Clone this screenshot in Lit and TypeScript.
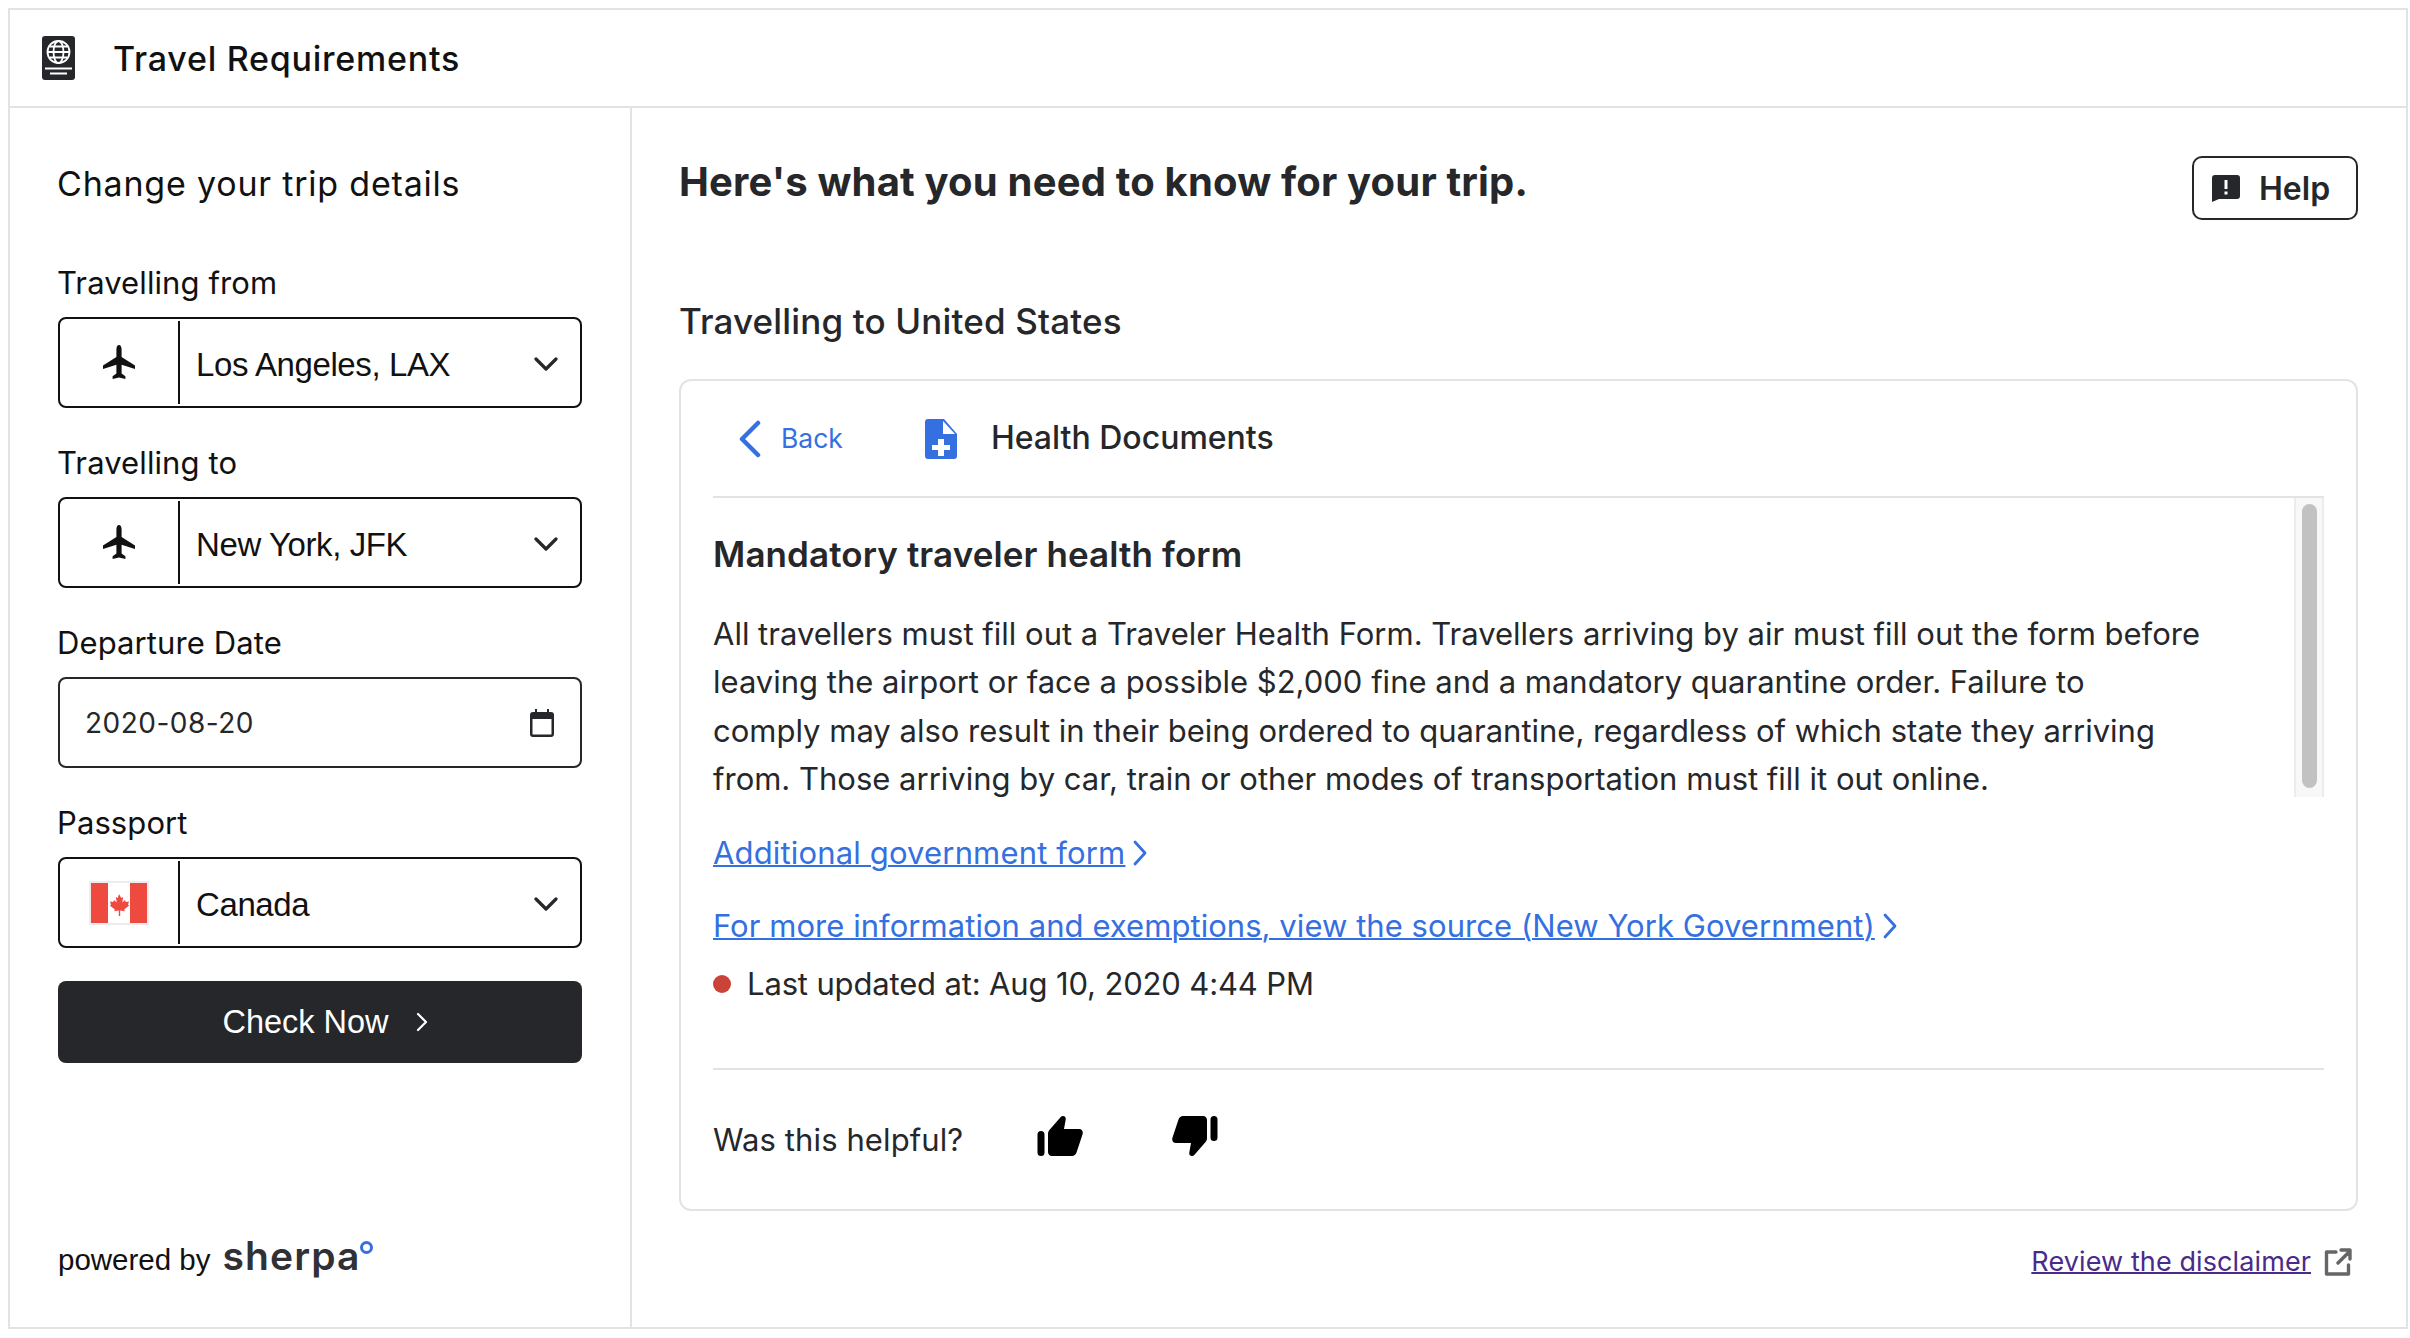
import { LitElement, html, css } from 'lit';
import { customElement } from 'lit/decorators.js';

const plane = html`<svg class="plane" viewBox="0 0 32 36"><path fill="#111" d="M16 0c1.600 0 2.600 2 2.600 4.500V12L32 20.500V24l-13.400-4.200v8.600l3.800 2.900V34L16 32.600 9.600 34v-2.700l3.800-2.900v-8.600L0 24v-3.500L13.400 12V4.500C13.400 2 14.400 0 16 0z"/></svg>`;

const chevronDown = html`<svg class="chev" viewBox="0 0 24 16"><path d="M2 3l10 10L22 3" fill="none" stroke="#25272a" stroke-width="3.200" stroke-linecap="round" stroke-linejoin="round"/></svg>`;

const flag = html`<svg class="flag" viewBox="0 0 60 44">
  <rect width="60" height="44" fill="#ececec"/>
  <rect x="2" y="2" width="56" height="40" fill="#fff"/>
  <rect x="2" y="2" width="17" height="40" fill="#ee4a40"/>
  <rect x="41" y="2" width="17" height="40" fill="#ee4a40"/>
  <path fill="#ee4a40" d="M30 13l2.200 4 2-1-1 5.500 2.800-2.500.8 2 3.200-.5-1 3.200 1.200.8-5 4 .5 1.800-4.500-.8V35h-1.400v-5.500l-4.500.8.500-1.800-5-4 1.200-.8-1-3.200 3.200.5.800-2 2.800 2.500-1-5.500 2 1z"/>
</svg>`;

@customElement('app-root')
export class AppRoot extends LitElement {
  static styles = css`
    :host {
      display: block;
      font-family: 'Inter', 'Liberation Sans', sans-serif;
      color: #25272a;
    }
    .frame {
      box-sizing: border-box;
      width: 2400px;
      height: 1321px;
      margin: 8px;
      border: 2px solid #e3e3e3;
      display: flex;
      flex-direction: column;
    }
    .top {
      box-sizing: border-box;
      height: 98px;
      border-bottom: 2px solid #e3e3e3;
      display: flex;
      align-items: center;
      padding-left: 32px;
      gap: 38px;
      flex: none;
    }
    .top svg { width: 33px; height: 44px; }
    .top h1 {
      margin: 0;
      font-size: 34px;
      font-weight: 500;
      letter-spacing: 0.75px;
      color: #111;
    }
    .body { flex: 1; display: flex; min-height: 0; }
    aside {
      box-sizing: border-box;
      width: 622px;
      border-right: 2px solid #e3e3e3;
      padding: 54px 48px 0;
      display: flex;
      flex-direction: column;
    }
    .section-title {
      margin: 0 0 0 -1px;
      font-size: 34px;
      line-height: 44px;
      font-weight: 400;
      letter-spacing: 0.8px;
      color: #111;
    }
    form { margin-top: 71px; display: flex; flex-direction: column; gap: 49px; }
    label {
      display: block;
      font-size: 31px;
      line-height: 34px;
      margin: -11px 0 17px -1px;
      letter-spacing: 0.1px;
      color: #111;
    }
    .select {
      box-sizing: border-box;
      width: 524px;
      height: 91px;
      border: 2px solid #111;
      border-radius: 8px;
      display: flex;
      align-items: center;
      padding: 2px 0;
    }
    .select .lead {
      box-sizing: border-box;
      width: 120px;
      height: 100%;
      border-right: 2px solid #111;
      display: flex;
      align-items: center;
      justify-content: center;
      flex: none;
    }
    .plane { width: 32px; height: 36px; }
    .flag { width: 60px; height: 44px; }
    .select .value {
      flex: 1;
      padding: 5px 0 0 16px;
      font-family: 'Liberation Sans', sans-serif;
      font-size: 33px;
      letter-spacing: -0.4px;
      color: #111;
    }
    .chev { width: 24px; height: 16px; margin-right: 22px; margin-top: 2px; }
    .date {
      box-sizing: border-box;
      width: 524px;
      height: 91px;
      border: 2px solid #25272a;
      border-radius: 8px;
      display: flex;
      align-items: center;
      justify-content: space-between;
      padding: 0 26px 0 25px;
      font-size: 28px;
      letter-spacing: 0.5px;
    }
    .date svg { width: 24px; height: 28px; }
    .check {
      box-sizing: border-box;
      width: 524px;
      height: 82px;
      margin-top: -16px;
      padding-left: 10px;
      background: #25272a;
      color: #fff;
      border-radius: 8px;
      display: flex;
      align-items: center;
      justify-content: center;
      gap: 27px;
      font-family: 'Liberation Sans', sans-serif;
      font-size: 32.500px;
    }
    .check svg { width: 12px; height: 22px; }
    .powered {
      margin-top: auto;
      padding-bottom: 48px;
      display: flex;
      align-items: baseline;
      gap: 12px;
      font-family: 'Liberation Sans', sans-serif;
      font-size: 29.500px;
      color: #111;
    }
    .sherpa {
      font-family: 'Inter', sans-serif;
      font-size: 39px;
      font-weight: 600;
      letter-spacing: 1.1px;
      color: #2f3136;
      position: relative;
    }
    .sherpa i {
      position: absolute;
      right: -13px;
      top: 9px;
      width: 7px;
      height: 7px;
      border: 3px solid #3570e0;
      border-radius: 50%;
    }
    main {
      flex: 1;
      min-width: 0;
      padding: 48px 48px 0 47px;
      display: flex;
      flex-direction: column;
    }
    .intro { display: flex; justify-content: space-between; align-items: flex-start; }
    .intro h2 {
      margin: 2px 0 0;
      font-size: 40px;
      line-height: 48px;
      font-weight: 700;
      letter-spacing: 0.18px;
    }
    .help {
      box-sizing: border-box;
      width: 166px;
      height: 64px;
      border: 2px solid #25272a;
      border-radius: 10px;
      display: flex;
      align-items: center;
      gap: 19px;
      padding-left: 18px;
      font-size: 32px;
      font-weight: 600;
    }
    .help svg { width: 28px; height: 28px; flex: none; }
    .dest {
      margin: 79px 0 0;
      font-size: 35px;
      font-weight: 500;
      letter-spacing: 0.15px;
      color: #25272a;
    }
    .card {
      box-sizing: border-box;
      margin-top: 36px;
      height: 832px;
      border: 2px solid #e3e3e3;
      border-radius: 12px;
      padding: 0 32px;
    }
    .crumbs {
      box-sizing: border-box;
      height: 117px;
      border-bottom: 2px solid #e3e3e3;
      display: flex;
      align-items: center;
      padding-left: 26px;
    }
    .crumbs .back-icon { width: 22px; height: 38px; margin-right: 20px; }
    .crumbs .back { color: #3570e0; font-size: 26.500px; margin-right: 82px; padding-bottom: 2px; }
    .crumbs .doc { width: 32px; height: 40px; margin-right: 34px; }
    .crumbs .name { font-size: 32px; font-weight: 500; padding-bottom: 2px; }
    .scroll { display: flex; height: 299px; }
    .content { flex: 1; min-width: 0; }
    .content h3 { margin: 34px 0 0; font-size: 35px; line-height: 44px; font-weight: 600; letter-spacing: 0.1px; }
    .content p {
      margin: 34px 0 0;
      font-size: 31px;
      line-height: 48.300px;
      letter-spacing: 0;
      white-space: nowrap;
    }
    .track {
      box-sizing: border-box;
      width: 30px;
      flex: none;
      padding: 6px 5px 0 6px;
      background: #f8f8f8;
      border-left: 2px solid #ececec;
      border-right: 2px solid #ececec;
    }
    .thumb { height: 284px; background: #c2c2c2; border-radius: 8px; }
    .link {
      display: flex;
      align-items: center;
      gap: 8px;
      font-size: 31px;
      line-height: 44px;
      letter-spacing: 0.05px;
      color: #3570e0;
    }
    .link.short { letter-spacing: 0.16px; }
    .link span { text-decoration: underline; text-decoration-thickness: 2px; }
    .link svg { width: 14px; height: 26px; }
    .links { display: flex; flex-direction: column; gap: 29px; margin-top: 34px; }
    .updated {
      display: flex;
      align-items: center;
      gap: 16px;
      font-size: 31px;
      line-height: 44px;
      letter-spacing: -0.15px;
      margin-top: 14px;
    }
    .updated i { width: 18px; height: 18px; border-radius: 50%; background: #cb4239; }
    .helpful {
      border-top: 2px solid #e3e3e3;
      margin-top: 62px;
      height: 139px;
      display: flex;
      align-items: center;
      font-size: 31px;
      letter-spacing: 0.1px;
    }
    .helpful .up { width: 46px; height: 40px; margin-left: 74px; margin-top: -8px; }
    .helpful .down { width: 46px; height: 40px; margin-left: 89px; margin-top: -8px; }
    .disclaimer {
      display: flex;
      justify-content: flex-end;
      align-items: center;
      gap: 13px;
      margin-top: 34px;
      padding-right: 6px;
      font-size: 27px;
      letter-spacing: 0.1px;
      color: #4a2a8a;
    }
    .disclaimer a { color: inherit; text-decoration: underline; text-decoration-thickness: 2px; }
    .disclaimer svg { width: 28px; height: 28px; }
  `;

  private selectBox(lead: unknown, value: string) {
    return html`<div class="select">
      <div class="lead">${lead}</div>
      <div class="value">${value}</div>
      ${chevronDown}
    </div>`;
  }

  private chevronRight() {
    return html`<svg viewBox="0 0 14 26"><path d="M2 2l10 11L2 24" fill="none" stroke="#3570e0" stroke-width="2.800" stroke-linecap="round" stroke-linejoin="round"/></svg>`;
  }

  render() {
    return html`
      <div class="frame">
        <header class="top">
          <svg viewBox="0 0 33 44">
            <rect width="33" height="44" rx="3" fill="#25272a"/>
            <g fill="none" stroke="#fff" stroke-width="1.800">
              <circle cx="16.500" cy="16" r="11"/>
              <ellipse cx="16.500" cy="16" rx="5" ry="11"/>
              <path d="M5.500 16h22M7.500 10.500h18M7.500 21.500h18"/>
              <path d="M3 32.500h27M8 37.500h17"/>
            </g>
          </svg>
          <h1>Travel Requirements</h1>
        </header>
        <div class="body">
          <aside>
            <h2 class="section-title">Change your trip details</h2>
            <form>
              <div>
                <label>Travelling from</label>
                ${this.selectBox(plane, 'Los Angeles, LAX')}
              </div>
              <div>
                <label>Travelling to</label>
                ${this.selectBox(plane, 'New York, JFK')}
              </div>
              <div>
                <label>Departure Date</label>
                <div class="date">
                  <span>2020-08-20</span>
                  <svg viewBox="0 0 24 28"><path fill="#25272a" d="M5 0h2v3h10V0h2v3h2a3 3 0 0 1 3 3v19a3 3 0 0 1-3 3H3a3 3 0 0 1-3-3V6a3 3 0 0 1 3-3h2zM2.500 10v15a.5.5 0 0 0 .5.500h18a.5.5 0 0 0 .5-.5V10z"/></svg>
                </div>
              </div>
              <div>
                <label>Passport</label>
                ${this.selectBox(flag, 'Canada')}
              </div>
              <div class="check">
                <span>Check Now</span>
                <svg viewBox="0 0 12 22"><path d="M2 3l8 8-8 8" fill="none" stroke="#fff" stroke-width="2.200" stroke-linecap="round" stroke-linejoin="round"/></svg>
              </div>
            </form>
            <div class="powered">
              <span>powered by</span>
              <span class="sherpa">sherpa<i></i></span>
            </div>
          </aside>
          <main>
            <div class="intro">
              <h2>Here's what you need to know for your trip.</h2>
              <div class="help">
                <svg viewBox="0 0 28 28"><path fill="#25272a" fill-rule="evenodd" d="M3 1h22a3 3 0 0 1 3 3v18a3 3 0 0 1-3 3H7l-7 3V4a3 3 0 0 1 3-3zM12.500 6v9h3V6zm0 11.500v3h3v-3z"/></svg>
                <span>Help</span>
              </div>
            </div>
            <h2 class="section-title dest">Travelling to United States</h2>
            <section class="card">
              <div class="crumbs">
                <svg class="back-icon" viewBox="0 0 22 38"><path d="M19 3L3 19l16 16" fill="none" stroke="#3570e0" stroke-width="4.500" stroke-linecap="round" stroke-linejoin="round"/></svg>
                <span class="back">Back</span>
                <svg class="doc" viewBox="0 0 32 40"><path fill="#3570e0" fill-rule="evenodd" d="M3 0h16l13 15v22a3 3 0 0 1-3 3H3a3 3 0 0 1-3-3V3a3 3 0 0 1 3-3zM13 20v6H7v5h6v6h6v-6h6v-5h-6v-6zM18 2v13h12z"/></svg>
                <span class="name">Health Documents</span>
              </div>
              <div class="scroll">
                <div class="content">
                  <h3>Mandatory traveler health form</h3>
                  <p>All travellers must fill out a Traveler Health Form. Travellers arriving by air must fill out the form before<br>leaving the airport or face a possible $2,000 fine and a mandatory quarantine order. Failure to<br>comply may also result in their being ordered to quarantine, regardless of which state they arriving<br>from. Those arriving by car, train or other modes of transportation must fill it out online.</p>
                </div>
                <div class="track"><div class="thumb"></div></div>
              </div>
              <div class="links">
                <div class="link short"><span>Additional government form</span>${this.chevronRight()}</div>
                <div class="link"><span>For more information and exemptions, view the source (New York Government)</span>${this.chevronRight()}</div>
              </div>
              <div class="updated"><i></i><span>Last updated at: Aug 10, 2020 4:44 PM</span></div>
              <div class="helpful">
                <span>Was this helpful?</span>
                <svg class="up" viewBox="0 0 46 40"><path fill="#000" d="M4 15a3.500 3.500 0 0 1 3.500 3.500v18a3.500 3.500 0 0 1-7 0v-18A3.500 3.500 0 0 1 4 15zM26 0c2 0 3 1.500 2.700 3.500L27 13h15c3 0 4.500 2.500 3.500 5.500l-6 18c-.7 2-2.500 3.500-4.500 3.500H15c-2.500 0-4-2-4-4V18c0-1.500.3-2.500 1.200-3.700L23.500 1.200C24.200.4 25 0 26 0z"/></svg>
                <svg class="down" viewBox="0 0 46 40"><path fill="#000" d="M42 25a3.500 3.500 0 0 1-3.500-3.500v-18a3.500 3.500 0 0 1 7 0v18A3.500 3.500 0 0 1 42 25zM20 40c-2 0-3-1.500-2.700-3.500L19 27H4c-3 0-4.500-2.500-3.500-5.500l6-18C7.200 1.500 9 0 11 0h20c2.500 0 4 2 4 4v18c0 1.500-.3 2.500-1.200 3.700L22.500 38.800c-.7.800-1.500 1.200-2.500 1.200z"/></svg>
              </div>
            </section>
            <div class="disclaimer">
              <a>Review the disclaimer</a>
              <svg viewBox="0 0 28 28"><path d="M12 4H2.500v22h22v-9M14 15L26 3M17 2h9v9" fill="none" stroke="#666" stroke-width="3.400" stroke-linejoin="round" stroke-linecap="round"/></svg>
            </div>
          </main>
        </div>
      </div>
    `;
  }
}
